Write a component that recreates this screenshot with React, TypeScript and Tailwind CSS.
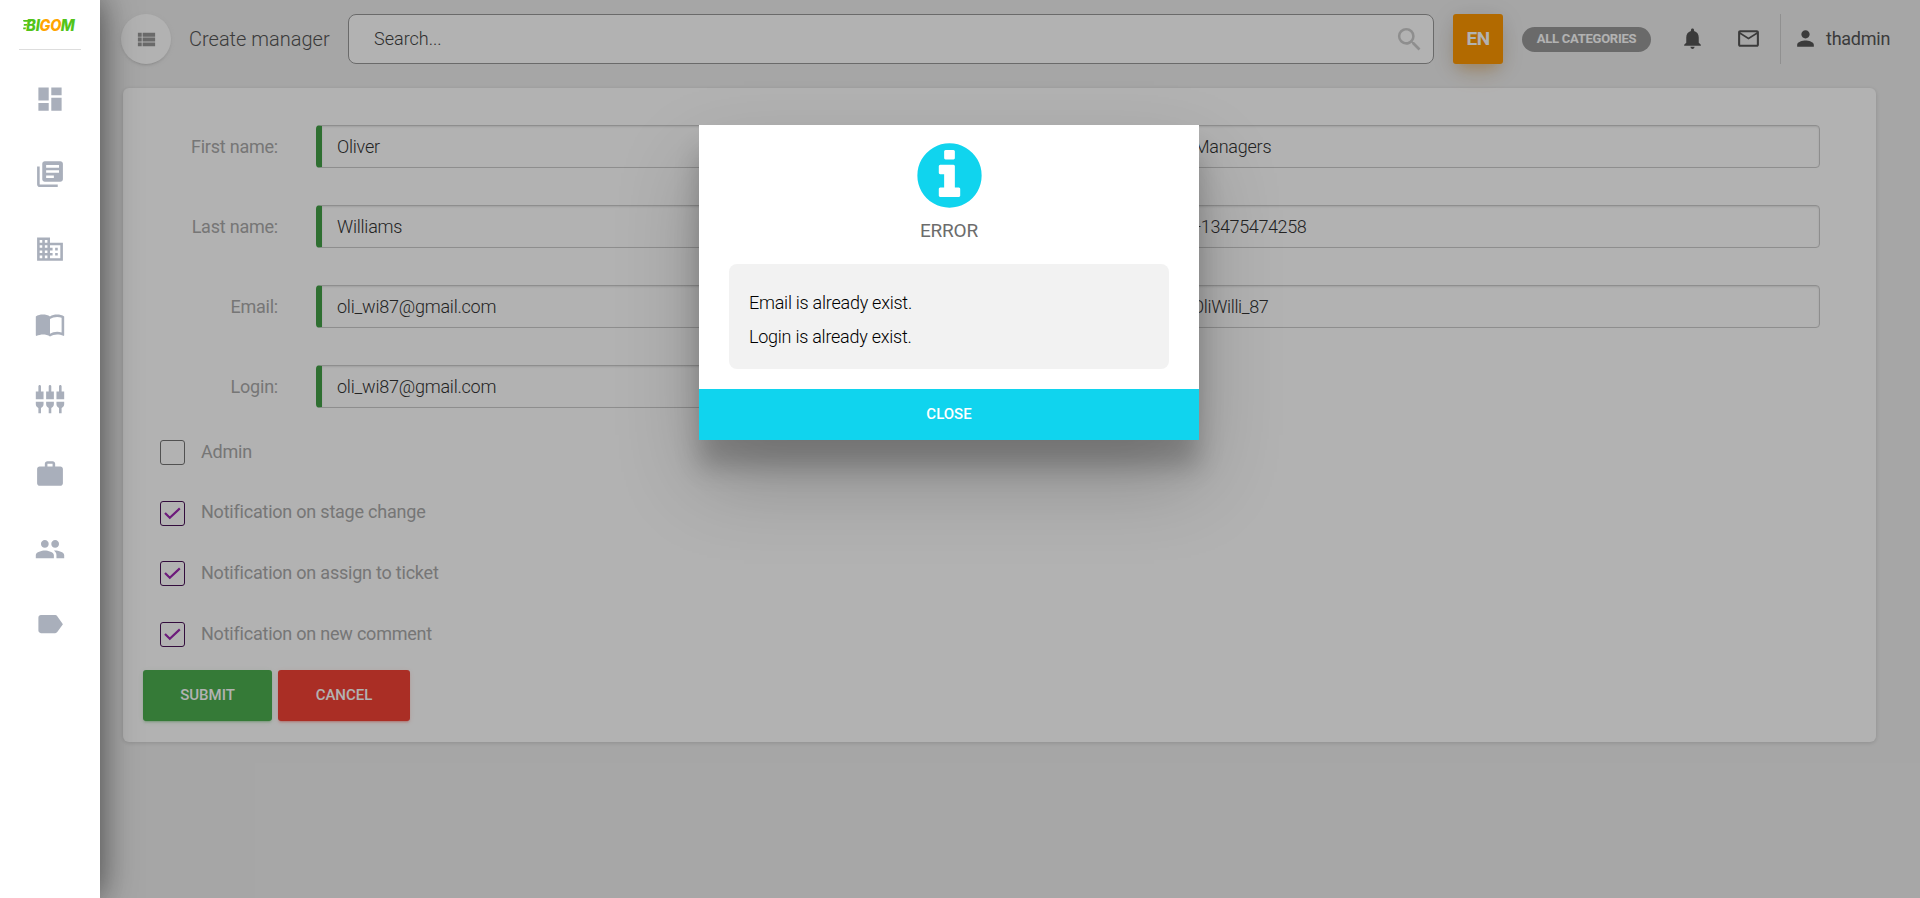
import React from "react";
import {
  MdDashboard,
  MdLibraryBooks,
  MdDomain,
  MdImportContacts,
  MdSettingsInputComponent,
  MdWork,
  MdPeople,
  MdLabel,
  MdViewList,
  MdSearch,
  MdNotifications,
  MdMailOutline,
  MdPerson,
} from "react-icons/md";

const NAV_ICONS = [
  MdDashboard,
  MdLibraryBooks,
  MdDomain,
  MdImportContacts,
  MdSettingsInputComponent,
  MdWork,
  MdPeople,
  MdLabel,
];

const LEFT_FIELDS = [
  { label: "First name:", value: "Oliver" },
  { label: "Last name:", value: "Williams" },
  { label: "Email:", value: "oli_wi87@gmail.com" },
  { label: "Login:", value: "oli_wi87@gmail.com" },
];

const OPTIONS = [
  { label: "Admin", checked: false },
  { label: "Notification on stage change", checked: true },
  { label: "Notification on assign to ticket", checked: true },
  { label: "Notification on new comment", checked: true },
];

function Logo() {
  return (
    <svg width="62" height="28" viewBox="0 -8 62 28" className="block">
      <path d="M4 2h8.5l-.6 1.8H4.6zM4.8 6.1h3.4l-.5 1.6H4.8zM4.2 9.6h2.8l-.4 1.6H4.2z" fill="#52c41a" />
      <g fontFamily="Inter, sans-serif" fontSize="15.4" fontWeight="800" fontStyle="italic">
        <text x="7" y="13" textLength="14" lengthAdjust="spacingAndGlyphs" fill="#52c41a">
          BI
        </text>
        <text x="20.5" y="13" textLength="22" lengthAdjust="spacingAndGlyphs" fill="#ffa500">
          GO
        </text>
        <text x="41.8" y="13" textLength="14" lengthAdjust="spacingAndGlyphs" fill="#52c41a">
          M
        </text>
      </g>
    </svg>
  );
}

function Sidebar() {
  return (
    <aside className="relative z-20 flex h-full w-[100px] shrink-0 flex-col items-center bg-white shadow-[0_0_38px_0_rgba(0,0,0,0.52),0_0_25px_0_rgba(0,0,0,0.12)]">
      <div className="flex h-[50px] w-[62px] justify-center border-b border-[#dddddd] pt-[10px]">
        <Logo />
      </div>
      <nav className="mt-[11px] flex flex-col text-[#a9afbb]">
        {NAV_ICONS.map((Icon, i) => (
          <a key={i} className="flex h-[75px] items-center justify-center">
            <Icon size={32} viewBox="-0.4 -0.5 24.8 24.8" />
          </a>
        ))}
      </nav>
    </aside>
  );
}

function Header() {
  return (
    <header className="flex h-[50px] items-center">
      <button className="flex size-[50px] shrink-0 items-center justify-center rounded-full bg-white text-[#999999] shadow-[0_2px_2px_0_rgba(153,153,153,0.14),0_3px_1px_-2px_rgba(153,153,153,0.2),0_1px_5px_0_rgba(153,153,153,0.12)]">
        <MdViewList size={23} />
      </button>
      <h1 className="ml-[18px] w-[159px] text-[20px] font-light text-[#555555]">Create manager</h1>
      <div className="flex h-[50px] w-[1086px] items-center justify-between rounded-[8px] border border-[#999999] bg-white pr-[8px] pl-[25px]">
        <span className="pb-[2px] text-[18px] font-light text-[#444444]">Search...</span>
        <MdSearch size={31} className="text-[#cccccc]" />
      </div>
      <button className="ml-[19px] h-[50px] w-[50px] rounded-[3px] bg-[#ff9800] text-[19px] font-bold tracking-[-0.6px] text-white shadow-[0_14px_26px_-12px_rgba(255,152,0,0.42),0_4px_23px_0_rgba(0,0,0,0.12),0_8px_10px_-5px_rgba(255,152,0,0.2)]">
        EN
      </button>
      <span className="ml-[19px] flex h-[25px] w-[129px] items-center justify-center rounded-full bg-[#999999] text-[13px] font-bold tracking-[-0.25px] text-white">
        ALL CATEGORIES
      </span>
      <MdNotifications size={25} className="-mt-[2px] ml-[29px] text-[#555555]" />
      <MdMailOutline size={25} className="-mt-[2px] ml-[31px] text-[#555555]" />
      <div className="ml-[19px] flex h-[50px] items-center border-l border-[#cfcfcf] pb-[2px] pl-[12px]">
        <MdPerson size={25} className="text-[#555555]" />
        <span className="ml-[8px] text-[18px] font-normal tracking-[-0.25px] text-[#555555]">thadmin</span>
      </div>
    </header>
  );
}

function RequiredField({ value }: { value: string }) {
  return (
    <div className="flex h-[43px] flex-1 items-center rounded-[4px] border border-l-[6px] border-[#cccccc] border-l-[#43a047] pl-[15px] text-[18px] font-light tracking-[-0.23px] text-[#333333] shadow-[inset_0_1px_2px_#e4e4e4]">
      {value}
    </div>
  );
}

const OPTIONAL_FIELD =
  "flex h-[43px] items-center rounded-[4px] border border-[#cccccc] text-[18px] font-light text-[#333333] shadow-[inset_0_1px_2px_#e4e4e4]";

function Checkbox({ checked }: { checked: boolean }) {
  if (!checked) {
    return <span className="size-[25px] rounded-[3px] border border-[#757575]" />;
  }
  return (
    <span className="flex size-[25px] items-center justify-center rounded-[3px] border border-[#4a1458]">
      <svg width="17" height="13" viewBox="0 0 17 13" fill="none">
        <path d="M1 6L5.8 10.7L15.8 1.4" stroke="#9c27b0" strokeWidth="2.2" />
      </svg>
    </span>
  );
}

function ManagerForm() {
  return (
    <section className="mt-[24px] ml-[2px] h-[654px] w-[1753px] rounded-[6px] bg-white pt-[37px] shadow-[0_1px_4px_0_rgba(0,0,0,0.14)]">
      <div className="flex">
        <div className="flex w-[750px] flex-col gap-[37px]">
          {LEFT_FIELDS.map((f) => (
            <div key={f.label} className="flex items-center">
              <label className="mr-[38px] w-[155px] text-right text-[18px] tracking-[-0.22px] text-[#aaaaaa]">
                {f.label}
              </label>
              <RequiredField value={f.value} />
            </div>
          ))}
        </div>
        <div className="ml-[297px] flex w-[650px] flex-col gap-[37px]">
          <div className={`${OPTIONAL_FIELD} pl-[23px] tracking-[-0.25px]`}>Managers</div>
          <div className={`${OPTIONAL_FIELD} pl-[20px] tracking-[-0.38px]`}>+13475474258</div>
          <div className={`${OPTIONAL_FIELD} pl-[21px] tracking-[-0.35px]`}>OliWilli_87</div>
        </div>
      </div>
      <div className="mt-[32px] ml-[37px] flex flex-col gap-[35.6px]">
        {OPTIONS.map((o) => (
          <div
            key={o.label}
            className="flex h-[25px] items-center gap-[16px] text-[18px] tracking-[-0.22px] text-[#aaaaaa]"
          >
            <Checkbox checked={o.checked} />
            <span className="-mt-[2.4px]">{o.label}</span>
          </div>
        ))}
      </div>
      <div className="mt-[23px] ml-[20px] flex gap-[6px] text-[15px] font-medium text-white">
        <button className="h-[51px] w-[129px] rounded-[3px] bg-[#4caf50] shadow-[0_2px_2px_0_rgba(76,175,80,0.14),0_3px_1px_-2px_rgba(76,175,80,0.2),0_1px_5px_0_rgba(76,175,80,0.12)]">
          SUBMIT
        </button>
        <button className="h-[51px] w-[132px] rounded-[3px] bg-[#f44336] shadow-[0_2px_2px_0_rgba(244,67,54,0.14),0_3px_1px_-2px_rgba(244,67,54,0.2),0_1px_5px_0_rgba(244,67,54,0.12)]">
          CANCEL
        </button>
      </div>
    </section>
  );
}

function InfoIcon() {
  return (
    <svg width="75" height="75" viewBox="0 0 1792 1792" fill="#10d4ee">
      <path d="M1152 1376v-160q0-14-9-23t-23-9h-96v-512q0-14-9-23t-23-9h-320q-14 0-23 9t-9 23v160q0 14 9 23t23 9h96v320h-96q-14 0-23 9t-9 23v160q0 14 9 23t23 9h448q14 0 23-9t9-23zm-128-896v-160q0-14-9-23t-23-9h-192q-14 0-23 9t-9 23v160q0 14 9 23t23 9h192q14 0 23-9t9-23zm640 416q0 209-103 385.5t-279.5 279.5-385.5 103-385.5-103-279.5-279.5-103-385.5 103-385.5 279.5-279.5 385.5-103 385.5 103 279.5 279.5 103 385.5z" />
    </svg>
  );
}

function ErrorDialog() {
  return (
    <div className="absolute top-[125px] left-[699px] z-30 flex h-[315px] w-[500px] flex-col items-center bg-white shadow-[0_27px_24px_0_rgba(0,0,0,0.2),0_40px_77px_0_rgba(0,0,0,0.22)]">
      <div className="mt-[13px]">
        <InfoIcon />
      </div>
      <h2 className="mt-[4px] text-[19px] leading-[28px] tracking-[-0.2px] text-[#6c6c6c]">ERROR</h2>
      <div className="mt-[19px] h-[105px] w-[440px] rounded-[8px] bg-[#f2f2f2] pt-[22px] pl-[20px] text-[18px] leading-[34px] font-light tracking-[-0.25px] text-black">
        <p>Email is already exist.</p>
        <p>Login is already exist.</p>
      </div>
      <button className="mt-[20px] h-[51px] w-full bg-[#10d4ee] pb-[1px] text-[15px] font-medium text-white">
        CLOSE
      </button>
    </div>
  );
}

export default function App() {
  return (
    <div className="relative flex h-[898px] w-[1920px] overflow-hidden bg-[#eeeeee] font-['Roboto',sans-serif]">
      <Sidebar />
      <main className="flex-1 pt-[14px] pl-[21px]">
        <Header />
        <ManagerForm />
      </main>
      <div className="absolute inset-0 z-10 bg-black/30" />
      <ErrorDialog />
    </div>
  );
}
